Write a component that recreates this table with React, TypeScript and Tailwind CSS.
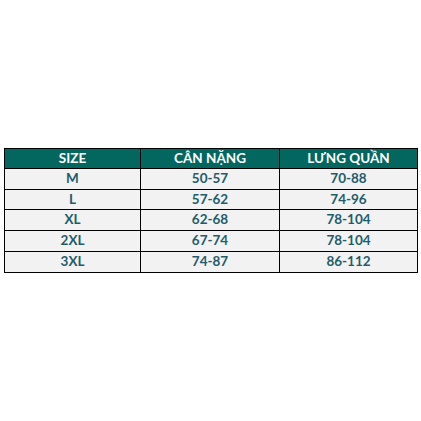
export default function App() {
  const rows = [
    ["M", "50-57", "70-88"],
    ["L", "57-62", "74-96"],
    ["XL", "62-68", "78-104"],
    ["2XL", "67-74", "78-104"],
    ["3XL", "74-87", "86-112"],
  ];
  const heights = ["h-[20px]", "h-[19px]", "h-[20px]", "h-[20px]", "h-[20px]"];
  return (
    <div className="w-[421px] h-[421px] bg-white pt-[148px] pl-[4px]" style={{ fontFamily: '"Lato", "Liberation Sans", sans-serif' }}>
      <div className="w-[414px] bg-black p-px grid grid-cols-[135px_138px_137px] gap-px">
        {["SIZE", "CÂN NẶNG", "LƯNG QUẦN"].map((h) => (
          <div key={h} className="h-[19px] bg-[#04675f] text-white font-bold text-[13.5px] flex items-center justify-center leading-none">
            {h}
          </div>
        ))}
        {rows.map((r, i) =>
          r.map((c, j) => (
            <div
              key={i + "-" + j}
              className={`${heights[i]} bg-[#f2f2f2] text-[#1f5c6a] font-bold text-[13.5px] flex items-center justify-center leading-none`}
            >
              {c}
            </div>
          ))
        )}
      </div>
    </div>
  );
}
